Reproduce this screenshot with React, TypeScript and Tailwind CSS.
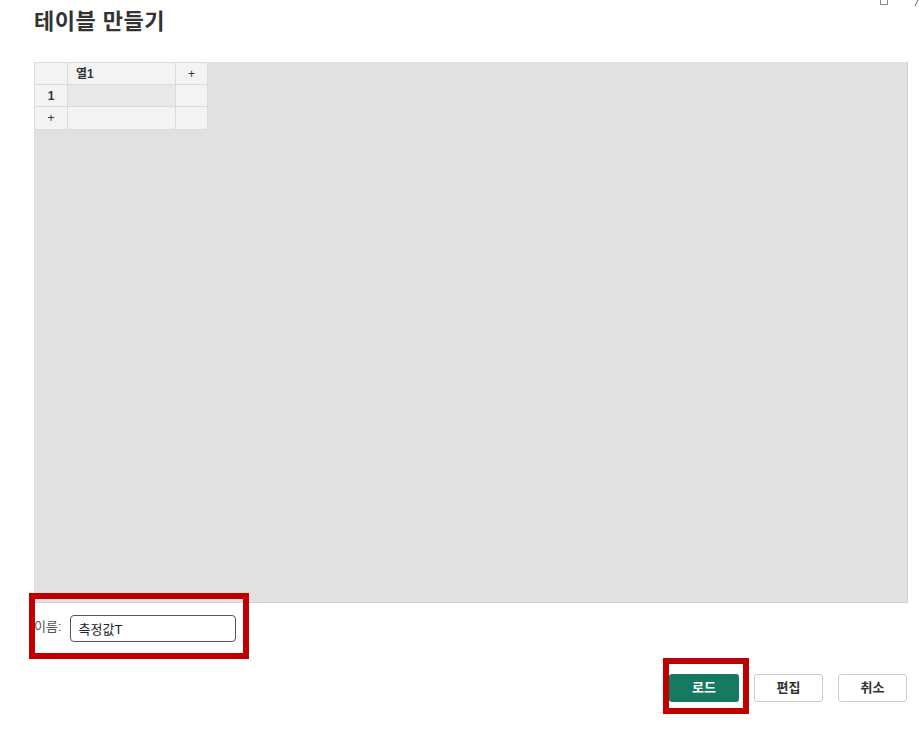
import React from 'react'

const font = { fontFamily: '"Liberation Sans", "Noto Sans CJK KR", sans-serif' }

function Cell({ children, className = '' }: { children?: React.ReactNode; className?: string }) {
  return (
    <div
      className={`flex items-center border-r border-b border-[#dadada] text-[12px] font-bold text-[#333] ${className}`}
    >
      {children}
    </div>
  )
}

export default function App() {
  return (
    <div className="relative h-[736px] w-[919px] overflow-hidden bg-white" style={font}>
      {/* window controls, clipped at the top edge */}
      <div className="absolute top-[-4px] left-[880px] h-[9px] w-[8px] border border-[#888]" />
      <svg className="absolute top-0 left-[913px]" width="6" height="8" viewBox="0 0 6 8">
        <path d="M5 0 L2 6" stroke="#666" strokeWidth="1" fill="none" />
      </svg>

      <div className="pl-[34px] pr-[12px]">
        <h1 className="pt-[7px] text-[22px] leading-[30px] font-bold tracking-[0.5px] text-[#333]">테이블 만들기</h1>

        {/* grid area */}
        <div className="mt-[25px] h-[541px] w-[874px] border-r border-b border-[#d0d0d0] bg-[#e1e1e1]">
          <div className="grid w-[173px] grid-cols-[33px_108px_32px] grid-rows-[22px_22px_23px] border-t border-l border-[#dadada]">
            <Cell className="bg-[#f3f3f3]" />
            <Cell className="bg-[#f3f3f3] pl-[8px]">열1</Cell>
            <Cell className="justify-center bg-[#f3f3f3] font-normal">+</Cell>
            <Cell className="justify-center bg-[#f3f3f3]">1</Cell>
            <Cell className="bg-[#e8e8e8]" />
            <Cell className="bg-[#f3f3f3]" />
            <Cell className="justify-center bg-[#f3f3f3] font-normal">+</Cell>
            <Cell className="bg-[#f3f3f3]" />
            <Cell className="bg-[#f3f3f3]" />
          </div>
        </div>

        {/* name row */}
        <div className="mt-[12px] flex items-center gap-[8px]">
          <span className="-mt-[4px] text-[13px] text-[#555]">이름:</span>
          <input
            defaultValue="측정값T"
            className="h-[27px] w-[166px] rounded-[4px] border border-[#555] px-[8px] text-[13px] text-[#222] outline-none"
          />
        </div>

        {/* buttons */}
        <div className="mt-[32px] flex justify-end gap-[15px]">
          <button className="h-[28px] w-[70px] rounded-[3px] bg-[#167a62] text-[13px] font-bold text-white">로드</button>
          <button className="h-[28px] w-[69px] rounded-[3px] border border-[#ccc] bg-white text-[13px] font-bold text-[#333]">편집</button>
          <button className="h-[28px] w-[69px] rounded-[3px] border border-[#ccc] bg-white text-[13px] font-bold text-[#333]">취소</button>
        </div>
      </div>

      {/* annotation highlights */}
      <div className="pointer-events-none absolute top-[593px] left-[29px] h-[66px] w-[220px] border-[6px] border-[#c00000]" />
      <div className="pointer-events-none absolute top-[658px] left-[663px] h-[56px] w-[86px] border-[6px] border-[#c00000]" />
    </div>
  )
}
